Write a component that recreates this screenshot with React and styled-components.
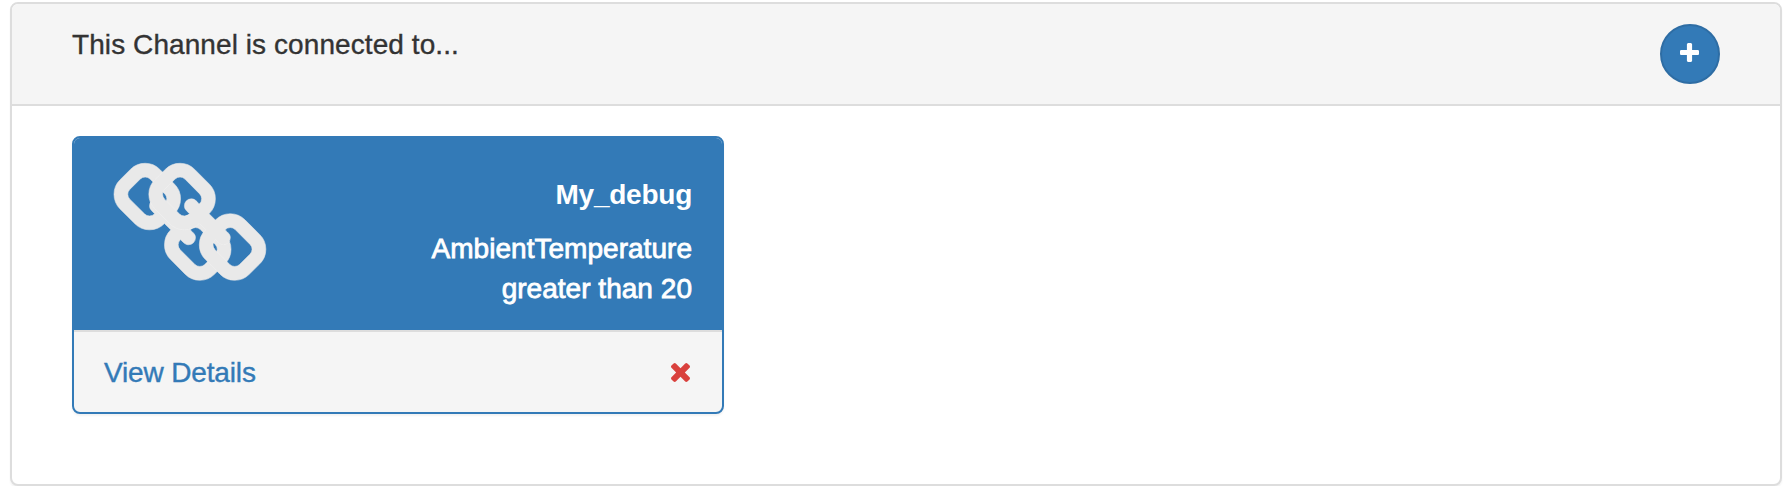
import React from "react";
import styled, { createGlobalStyle } from "styled-components";

const GlobalStyle = createGlobalStyle`
  * { box-sizing: border-box; }
  body {
    margin: 0;
    background: #fff;
    color: #333;
    font: 28px/40px "Liberation Sans", Arial, sans-serif;
  }
`;

const Panel = styled.section`
  height: 484px;
  margin: 2px 6px 0 10px;
  background: #fff;
  border: 2px solid #ddd;
  border-radius: 8px;
  box-shadow: 0 2px 2px rgba(0, 0, 0, 0.05);
`;

const PanelHeader = styled.header`
  display: flex;
  justify-content: space-between;
  align-items: flex-start;
  height: 102px;
  padding: 20px 60px;
  background: #f5f5f5;
  border-bottom: 2px solid #ddd;
  border-radius: 6px 6px 0 0;
`;

const Title = styled.span`
  padding-top: 1px;
  letter-spacing: 0.08px;
  -webkit-text-stroke: 0.35px currentColor;
`;

const AddButton = styled.button`
  display: flex;
  justify-content: center;
  width: 60px;
  height: 60px;
  padding: 17px 1px 0 0;
  color: #fff;
  background: #337ab7;
  border: 2px solid #2e6da4;
  border-radius: 50%;
`;

const PanelBody = styled.div`
  padding: 30px 60px;
`;

const Card = styled.article`
  width: 652px;
  height: 278px;
  background: #f5f5f5;
  border: 2px solid #337ab7;
  border-radius: 8px;
  box-shadow: 0 2px 2px rgba(0, 0, 0, 0.05);
`;

const CardHeading = styled.div`
  display: flex;
  justify-content: space-between;
  height: 192px;
  padding: 25px 30px 0 40px;
  color: #fff;
  background: #337ab7;
  border-radius: 6px 6px 0 0;
`;

const CardText = styled.div`
  padding-top: 12px;
  text-align: right;
`;

const Name = styled.div`
  margin-bottom: 14px;
  font-weight: bold;
  letter-spacing: -0.25px;
`;

const Condition = styled.div`
  letter-spacing: 0.03px;
  -webkit-text-stroke: 0.8px currentColor;
`;

const CardFooter = styled.footer`
  display: flex;
  justify-content: space-between;
  height: 82px;
  padding: 20px 32px 0 30px;
  border-top: 2px solid #ddd;
`;

const DetailsLink = styled.a`
  padding-top: 1px;
  color: #337ab7;
  text-decoration: none;
  letter-spacing: -0.15px;
  -webkit-text-stroke: 0.4px currentColor;
`;

const RemoveIcon = styled.svg`
  width: 19px;
  height: 19px;
  margin-top: 11px;
  color: #d9413d;
`;

const PlusIcon = styled.svg`
  width: 19px;
  height: 19px;
`;

const ChainIcon = styled.svg`
  width: 152px;
  height: 117px;
  overflow: visible;
`;

const LINK =
  "M1520 1216q0-40-28-68l-208-208q-28-28-68-28-42 0-72 32 3 3 19 18.5t21.5 21.5 15 19 13 25.5 3.5 27.5q0 40-28 68t-68 28q-15 0-27.5-3.5t-25.5-13-19-15-21.5-21.5-18.5-19q-33 31-33 73 0 40 28 68l206 207q27 27 68 27 40 0 68-26l147-146q28-28 28-67zm-703-705q0-40-28-68l-206-207q-28-28-68-28-39 0-68 27l-147 146q-28 28-28 67 0 40 28 68l208 208q27 27 68 27 42 0 72-31-3-3-19-18.5t-21.5-21.5-15-19-13-25.5-3.5-27.5q0-40 28-68t68-28q15 0 27.5 3.5t25.5 13 19 15 21.5 21.5 18.5 19q33-31 33-73zm895 705q0 120-85 203l-147 146q-83 83-203 83-121 0-204-85l-206-207q-83-83-83-203 0-123 88-209l-88-88q-86 88-208 88-120 0-204-84l-208-208q-84-84-84-204t85-203l147-146q83-83 203-83 121 0 204 85l206 207q83 83 83 203 0 123-88 209l88 88q86-88 208-88 120 0 204 84l208 208q84 84 84 204z";
const PLUS =
  "M1600 736v192q0 40-28 68t-68 28h-416v416q0 40-28 68t-68 28h-192q-40 0-68-28t-28-68v-416h-416q-40 0-68-28t-28-68v-192q0-40 28-68t68-28h416v-416q0-40 28-68t68-28h192q40 0 68 28t28 68v416h416q40 0 68 28t28 68z";
const TIMES =
  "M1490 1322q0 40-28 68l-136 136q-28 28-68 28t-68-28l-294-294-294 294q-28 28-68 28t-68-28l-136-136q-28-28-28-68t28-68l294-294-294-294q-28-28-28-68t28-68l136-136q28-28 68-28t68 28l294 294 294-294q28-28 68-28t68 28l136 136q28 28 28 68t-28 68l-294 294 294 294q28 28 28 68z";

export default function App() {
  return (
    <>
      <GlobalStyle />
      <Panel>
        <PanelHeader>
          <Title>This Channel is connected to...</Title>
          <AddButton aria-label="Add">
            <PlusIcon viewBox="192 128 1408 1408">
              <path fill="currentColor" d={PLUS} />
            </PlusIcon>
          </AddButton>
        </PanelHeader>
        <PanelBody>
          <Card>
            <CardHeading>
              <ChainIcon viewBox="80 12 2120 1632">
                <defs>
                  <clipPath id="first-link">
                    <path d={LINK} />
                  </clipPath>
                </defs>
                <g fill="#e9e9e9" stroke="#e9e9e9" strokeWidth="8">
                  <path d={LINK} />
                  <path d={LINK} transform="translate(486 0)" />
                </g>
                <g clipPath="url(#first-link)">
                  <path
                    fill="none"
                    stroke="#efefef"
                    strokeWidth="12"
                    d={LINK}
                    transform="translate(486 0)"
                  />
                </g>
              </ChainIcon>
              <CardText>
                <Name>My_debug</Name>
                <Condition>
                  AmbientTemperature
                  <br />
                  greater than 20
                </Condition>
              </CardText>
            </CardHeading>
            <CardFooter>
              <DetailsLink>View Details</DetailsLink>
              <RemoveIcon viewBox="302 366 1188 1188">
                <path fill="currentColor" d={TIMES} />
              </RemoveIcon>
            </CardFooter>
          </Card>
        </PanelBody>
      </Panel>
    </>
  );
}
